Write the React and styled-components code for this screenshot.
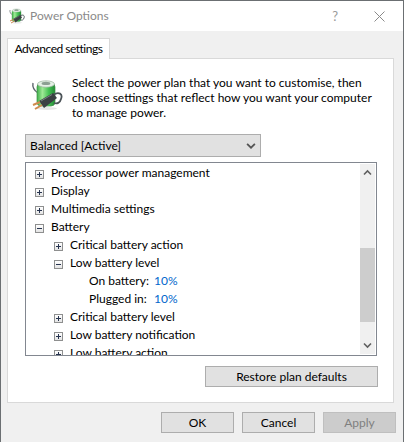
import React from "react";
import styled, { createGlobalStyle } from "styled-components";

const GlobalStyle = createGlobalStyle`
  html, body { margin: 0; padding: 0; background: #6b6f72; }
  body { font-family: "Lato", "Open Sans", sans-serif; font-size: 12px; color: #000; }
`;

const Window = styled.div`
  width: 402px;
  height: 441px;
  margin: 1px 0 0 1px;
  background: #f0f0f0;
  display: flex;
  flex-direction: column;
  overflow: hidden;
`;

const TitleBar = styled.div`
  height: 30px;
  flex: none;
  background: #fff;
  display: flex;
  align-items: center;
  padding: 0 18px 0 8px;
  color: #8a8a8a;
`;

const TitleText = styled.div`
  margin-left: 5px;
  padding-bottom: 1px;
  flex: 1;
`;

const TitleHelp = styled.div`
  font-size: 13px;
  margin-right: 36px;
  color: #9a9a9a;
`;

const Content = styled.div`
  flex: 1;
  padding: 7px 7px 0 6px;
  display: flex;
  flex-direction: column;
`;

const Tab = styled.div`
  width: 103px;
  height: 21px;
  box-sizing: border-box;
  background: #fff;
  border: 1px solid #d9d9d9;
  border-bottom: none;
  display: flex;
  align-items: center;
  justify-content: center;
  padding-bottom: 2px;
  margin-bottom: -1px;
  position: relative;
  z-index: 1;
  white-space: nowrap;
  letter-spacing: -0.5px;
`;

const Panel = styled.div`
  height: 345px;
  margin-right: 2px;
  box-sizing: border-box;
  background: #fff;
  border: 1px solid #d9d9d9;
  padding: 15px 15px 0 17px;
`;

const Intro = styled.div`
  display: flex;
  height: 60px;
`;

const IntroIcon = styled.div`
  width: 47px;
  flex: none;
  padding: 5px 0 0 6px;
  box-sizing: border-box;
`;

const IntroText = styled.div`
  line-height: 15px;
  padding-top: 1px;
  white-space: nowrap;
  width: 305px;
`;

const Select = styled.div`
  width: 236px;
  height: 23px;
  box-sizing: border-box;
  background: #e1e1e1;
  border: 1px solid #adadad;
  display: flex;
  align-items: center;
  justify-content: space-between;
  padding: 0 4px 0 4px;
`;

const Tree = styled.div`
  width: 352px;
  height: 194px;
  margin-top: 5px;
  box-sizing: border-box;
  background: #fff;
  border: 1px solid #828790;
  display: flex;
  overflow: hidden;
`;

const TreeList = styled.div`
  flex: 1;
  overflow: hidden;
`;

const Row = styled.div`
  height: 18px;
  display: flex;
  align-items: center;
  padding-left: ${(props) => props.indent}px;
  white-space: nowrap;
`;

const Expander = styled.span`
  width: 9px;
  height: 9px;
  box-sizing: border-box;
  border: 1px solid #8e8f8f;
  background: linear-gradient(#fff, #e4e4e4);
  position: relative;
  flex: none;
  margin: 4px 7px 0 0;
  &::before {
    content: "";
    position: absolute;
    left: 1px;
    right: 1px;
    top: 3px;
    height: 1px;
    background: #27344f;
  }
  &::after {
    content: "";
    display: ${(props) => (props.open ? "none" : "block")};
    position: absolute;
    top: 1px;
    bottom: 1px;
    left: 3px;
    width: 1px;
    background: #27344f;
  }
`;

const SettingLabel = styled.span`
  width: 65px;
`;

const SettingValue = styled.span`
  color: #0066cc;
`;

const Scrollbar = styled.div`
  width: 15px;
  margin: 1px 1px 1px 0;
  background: #f0f0f0;
  display: flex;
  flex-direction: column;
  justify-content: space-between;
`;

const ScrollArrow = styled.div`
  height: 17px;
  display: flex;
  align-items: center;
  justify-content: center;
`;

const ScrollTrack = styled.div`
  flex: 1;
  display: flex;
  flex-direction: column;
  padding-top: 67px;
`;

const ScrollThumb = styled.div`
  height: 74px;
  background: #cdcdcd;
`;

const RestoreRow = styled.div`
  display: flex;
  justify-content: flex-end;
  margin-top: 10px;
`;

const Button = styled.div`
  width: ${(props) => props.width || 73}px;
  height: 21px;
  box-sizing: border-box;
  padding-bottom: 1px;
  background: ${(props) => (props.disabled ? "#cccccc" : "#e1e1e1")};
  border: 1px solid ${(props) => (props.disabled ? "#bfbfbf" : "#adadad")};
  color: ${(props) => (props.disabled ? "#7f7f7f" : "#000")};
  display: flex;
  align-items: center;
  justify-content: center;
`;

const Footer = styled.div`
  display: flex;
  justify-content: flex-end;
  gap: 8px;
  margin-top: 9px;
`;

const BatteryIcon = ({ size, id }) => (
  <svg width={size} height={size} viewBox="0 0 32 32">
    <defs>
      <linearGradient id={id} x1="0" x2="1" y1="0" y2="0">
        <stop offset="0" stopColor="#3fb04a" />
        <stop offset="0.3" stopColor="#9fe896" />
        <stop offset="0.65" stopColor="#45c254" />
        <stop offset="1" stopColor="#238a35" />
      </linearGradient>
    </defs>
    <path d="M2 4 C1 9 4 12 7 14" fill="none" stroke="#5d666d" strokeWidth="1.4" />
    <rect x="6" y="4" width="18" height="23" rx="4" fill={`url(#${id})`} stroke="#3f8f48" strokeWidth="0.7" />
    <ellipse cx="15" cy="5" rx="8.5" ry="3.2" fill="#e4f0e5" stroke="#9bb39d" strokeWidth="0.7" />
    <ellipse cx="15" cy="4.4" rx="4.4" ry="1.7" fill="#8c9f92" />
    <path d="M22 16 C28 12 32 15 30 20 C29 24 26 25 23 24" fill="none" stroke="#4c5358" strokeWidth="1.8" />
    <path d="M8 22 L22 14 L26 19 L13 29 Z" fill="#3b4043" />
    <path d="M10 22 L21 15.5" stroke="#7a8084" strokeWidth="1" />
    <path d="M9 23 L2 26 M11 26 L4 30" stroke="#cf8a4e" strokeWidth="2" />
    <ellipse cx="16" cy="29.5" rx="10" ry="1.5" fill="#000" opacity="0.1" />
  </svg>
);

const Chevron = ({ up, color = "#606060", size = 9 }) => (
  <svg width={size} height={size} viewBox="0 0 9 9">
    <path
      d={up ? "M1 6.5 L4.5 3 L8 6.5" : "M1 2.5 L4.5 6 L8 2.5"}
      fill="none"
      stroke={color}
      strokeWidth="1.6"
    />
  </svg>
);

const Close = () => (
  <svg width="11" height="11" viewBox="0 0 11 11">
    <path d="M0.5 0.5 L10.5 10.5 M10.5 0.5 L0.5 10.5" stroke="#8a8a8a" strokeWidth="1" />
  </svg>
);

const rows = [
  { indent: 9, text: "Processor power management" },
  { indent: 9, text: "Display" },
  { indent: 9, text: "Multimedia settings" },
  { indent: 9, text: "Battery", open: true },
  { indent: 28, text: "Critical battery action" },
  { indent: 28, text: "Low battery level", open: true },
  { indent: 63, text: "On battery:", value: "10%" },
  { indent: 63, text: "Plugged in:", value: "10%" },
  { indent: 28, text: "Critical battery level" },
  { indent: 28, text: "Low battery notification" },
  { indent: 28, text: "Low battery action" },
];

export default function App() {
  return (
    <>
      <GlobalStyle />
      <Window>
        <TitleBar>
          <BatteryIcon size={16} id="cell-small" />
          <TitleText>Power Options</TitleText>
          <TitleHelp>?</TitleHelp>
          <Close />
        </TitleBar>
        <Content>
          <Tab>Advanced settings</Tab>
          <Panel>
            <Intro>
              <IntroIcon>
                <BatteryIcon size={32} id="cell-large" />
              </IntroIcon>
              <IntroText>
                Select the power plan that you want to customise, then
                <br />
                choose settings that reflect how you want your computer
                <br />
                to manage power.
              </IntroText>
            </Intro>
            <Select>
              Balanced [Active]
              <Chevron color="#555" size={10} />
            </Select>
            <Tree>
              <TreeList>
                {rows.map((row) => (
                  <Row key={row.text} indent={row.indent}>
                    {row.value ? (
                      <>
                        <SettingLabel>{row.text}</SettingLabel>
                        <SettingValue>{row.value}</SettingValue>
                      </>
                    ) : (
                      <>
                        <Expander open={row.open} />
                        {row.text}
                      </>
                    )}
                  </Row>
                ))}
              </TreeList>
              <Scrollbar>
                <ScrollArrow>
                  <Chevron up />
                </ScrollArrow>
                <ScrollTrack>
                  <ScrollThumb />
                </ScrollTrack>
                <ScrollArrow>
                  <Chevron />
                </ScrollArrow>
              </Scrollbar>
            </Tree>
            <RestoreRow>
              <Button width={173}>Restore plan defaults</Button>
            </RestoreRow>
          </Panel>
          <Footer>
            <Button>OK</Button>
            <Button>Cancel</Button>
            <Button disabled>Apply</Button>
          </Footer>
        </Content>
      </Window>
    </>
  );
}
